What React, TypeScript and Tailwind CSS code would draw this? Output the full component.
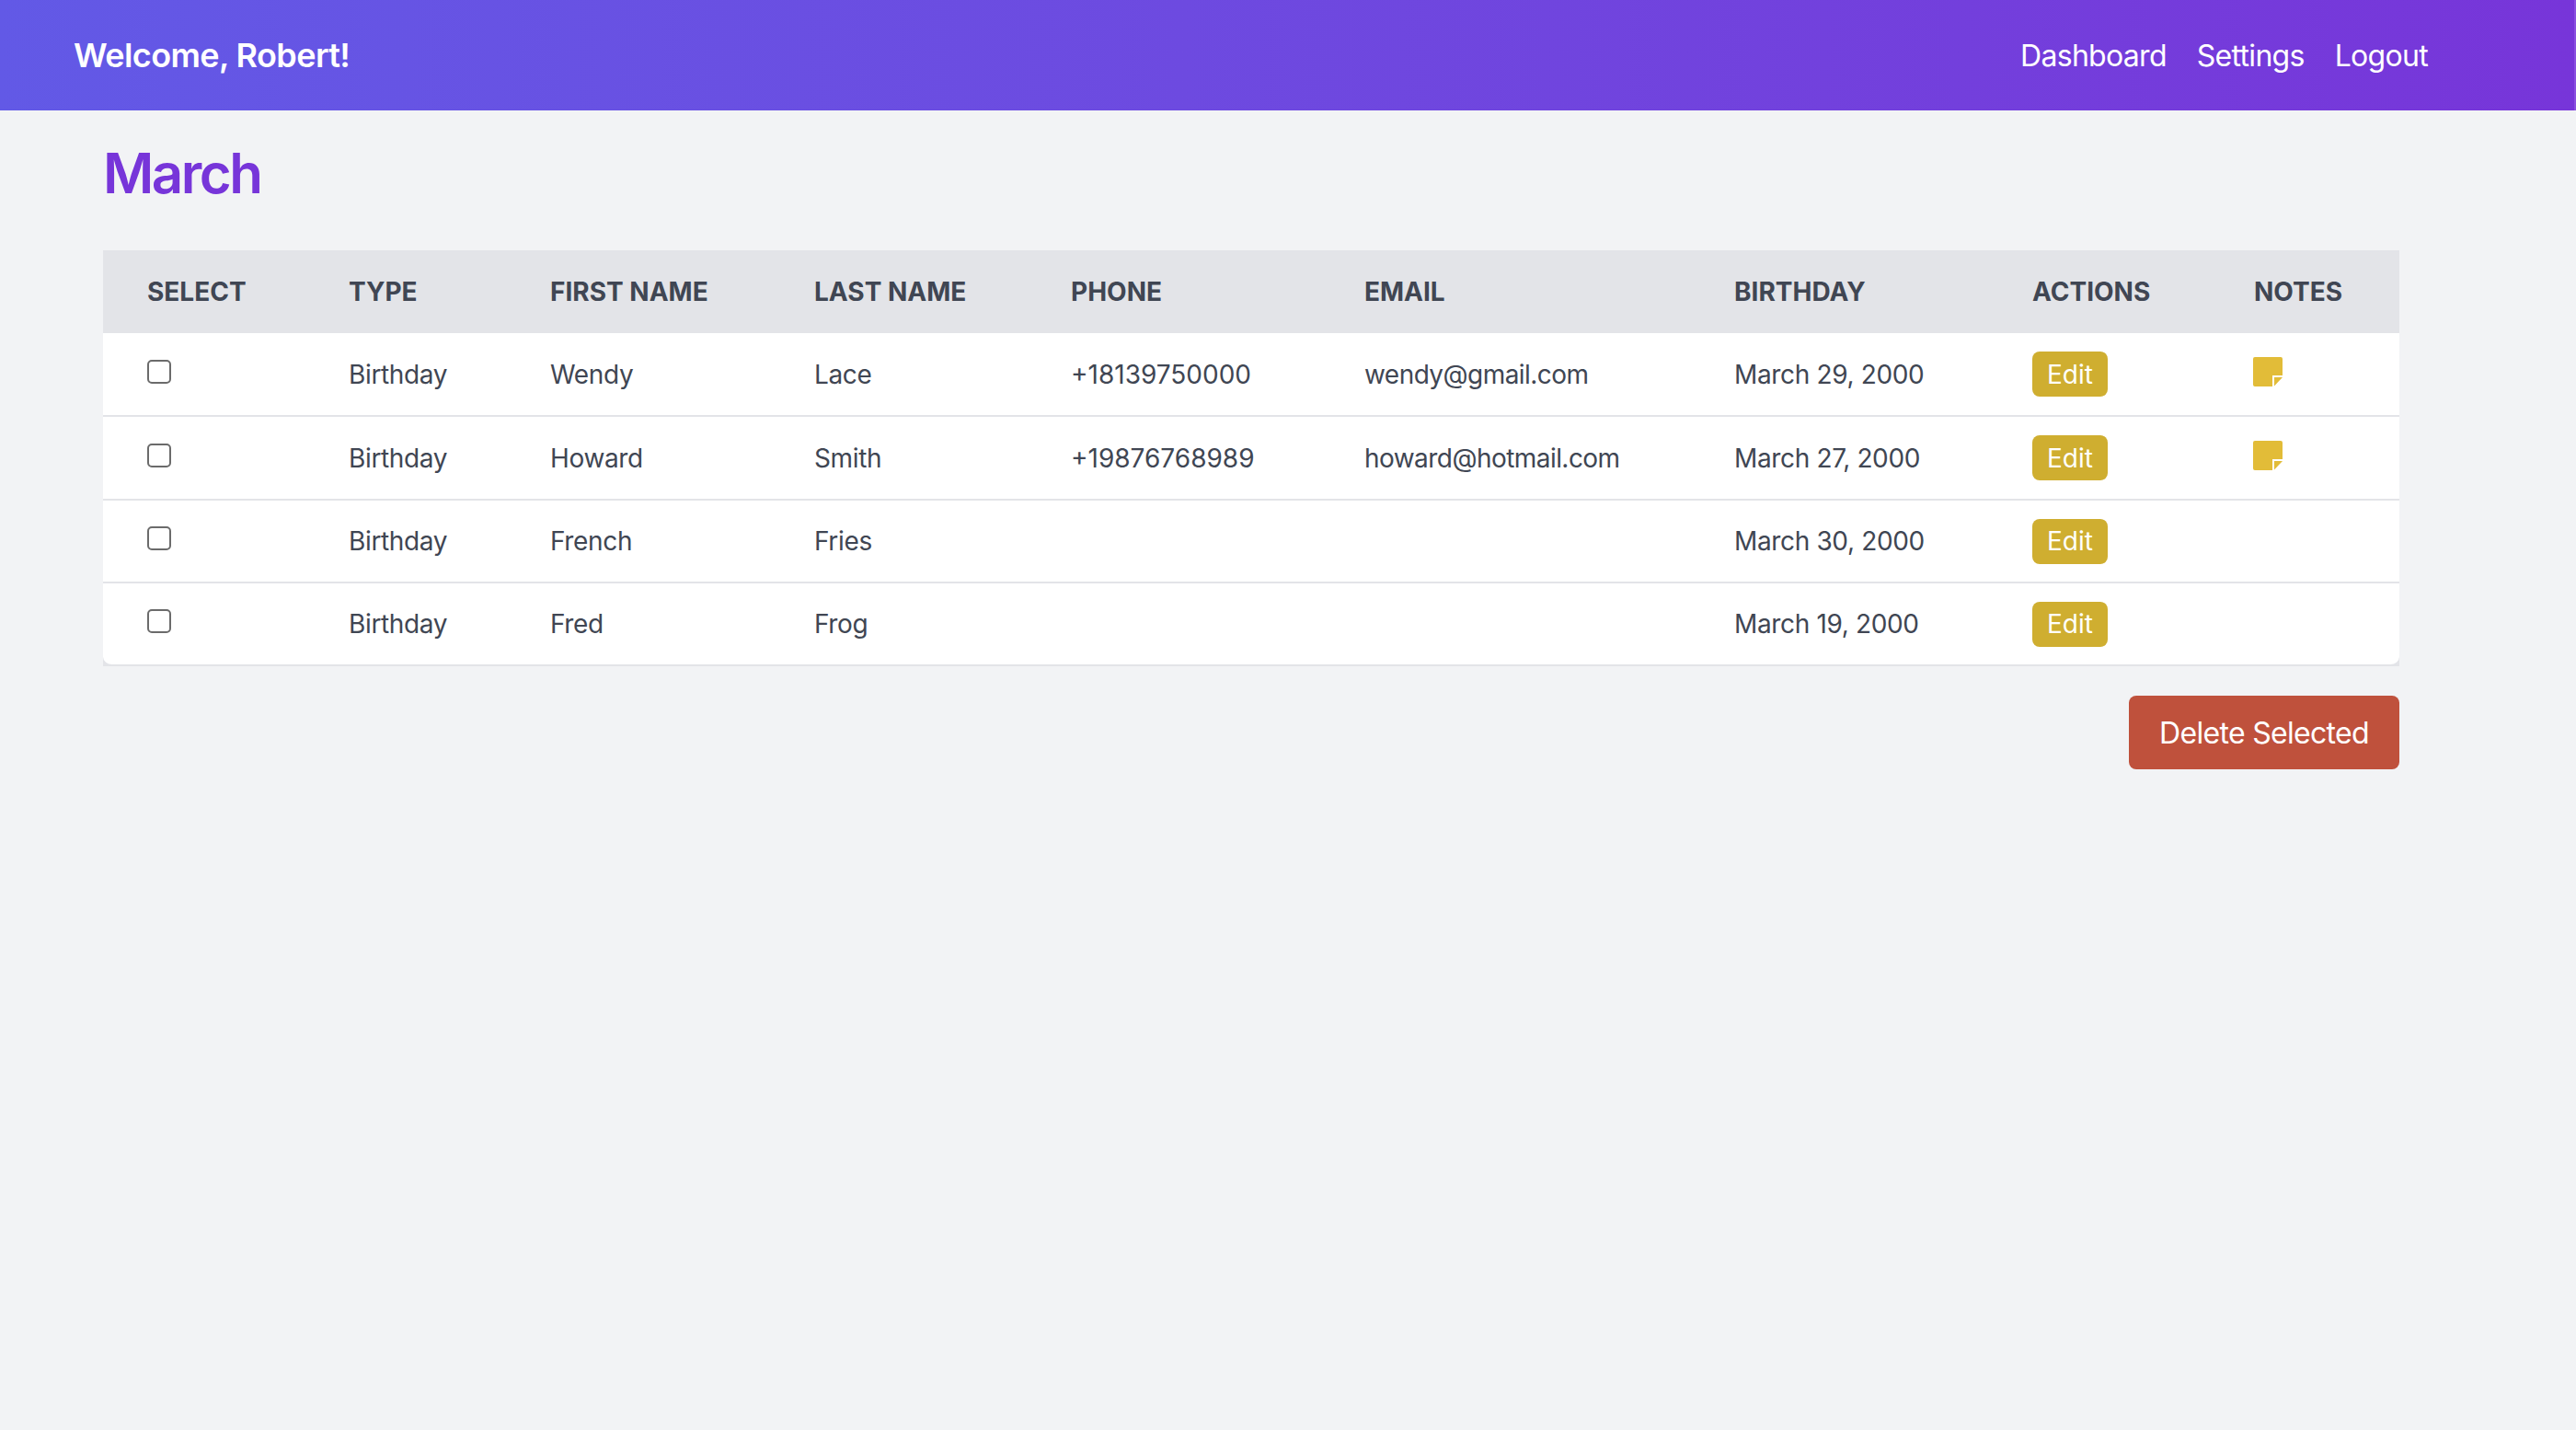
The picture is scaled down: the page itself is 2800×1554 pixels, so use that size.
import React from 'react';

const rows = [
  { first: 'Wendy', last: 'Lace', phone: '+18139750000', email: 'wendy@gmail.com', birthday: 'March 29, 2000', note: true },
  { first: 'Howard', last: 'Smith', phone: '+19876768989', email: 'howard@hotmail.com', birthday: 'March 27, 2000', note: true },
  { first: 'French', last: 'Fries', phone: '', email: '', birthday: 'March 30, 2000', note: false },
  { first: 'Fred', last: 'Frog', phone: '', email: '', birthday: 'March 19, 2000', note: false },
];

function NoteIcon() {
  return (
    <svg width="32" height="32" viewBox="0 0 32 32" className="block">
      <path d="M2 0h28a2 2 0 0 1 2 2v18H21v12H2a2 2 0 0 1-2-2V2a2 2 0 0 1 2-2z" fill="#e2bc38" />
      <path d="M23 22h9l-9 9.5z" fill="#e2bc38" />
    </svg>
  );
}

export default function App() {
  return (
    <div className="min-h-screen bg-[#f2f3f5] font-['Inter',sans-serif]">
      {/* Top bar */}
      <nav className="h-[120px] flex items-center justify-between pl-[80px] pr-[159px] bg-gradient-to-r from-[#6259e6] to-[#7735d9] border-r-2 border-[#8a4fe0] text-white">
        <div className="text-[36px] font-semibold tracking-[-0.6px]">Welcome, Robert!</div>
        <div className="flex items-center gap-[33px] text-[32px] tracking-[-0.7px] pt-[1px]">
          <a>Dashboard</a>
          <a>Settings</a>
          <a>Logout</a>
        </div>
      </nav>

      <main className="pl-[112px] w-[2608px]">
        <h1 className="pt-[32px] h-[152px] text-[60px] leading-[72px] font-semibold text-[#7735d9] tracking-[-2.5px]">March</h1>

        <div className="bg-[#e3e4e8]">
          <table className="w-full table-fixed border-separate border-spacing-0 text-[28px] text-[#404653] tracking-[-0.35px]">
            <thead>
              <tr className="h-[90px] text-left uppercase font-bold">
                <th className="w-[219px] pl-[48px] font-bold tracking-normal">Select</th>
                <th className="w-[219px] pl-[48px] font-bold tracking-normal">Type</th>
                <th className="w-[287px] pl-[48px] font-bold tracking-normal">First Name</th>
                <th className="w-[280px] pl-[48px] font-bold tracking-normal">Last Name</th>
                <th className="w-[318px] pl-[47px] font-bold tracking-normal">Phone</th>
                <th className="w-[402px] pl-[48px] font-bold tracking-normal">Email</th>
                <th className="w-[324px] pl-[48px] font-bold tracking-normal">Birthday</th>
                <th className="w-[241px] pl-[48px] font-bold tracking-normal">Actions</th>
                <th className="pl-[48px] font-bold tracking-normal">Notes</th>
              </tr>
            </thead>
            <tbody>
              {rows.map((r, i) => {
                const h = i < 2 ? 'h-[91px]' : 'h-[90px]';
                return (
                  <tr key={r.first} className={h}>
                    <td className={`pl-[48px] bg-white border-b-2 border-[#e3e4e8] ${i === 3 ? 'rounded-bl-[10px]' : ''}`}>
                      <div className="w-[26px] h-[26px] border-2 border-[#6b6b6b] rounded-[5px] bg-white -mt-[6px]" />
                    </td>
                    <td className="pl-[48px] bg-white border-b-2 border-[#e3e4e8]">Birthday</td>
                    <td className="pl-[48px] bg-white border-b-2 border-[#e3e4e8]">{r.first}</td>
                    <td className="pl-[48px] bg-white border-b-2 border-[#e3e4e8]">{r.last}</td>
                    <td className="pl-[47px] bg-white border-b-2 border-[#e3e4e8] tracking-normal">{r.phone}</td>
                    <td className="pl-[48px] bg-white border-b-2 border-[#e3e4e8] tracking-[-0.55px]">{r.email}</td>
                    <td className="pl-[48px] bg-white border-b-2 border-[#e3e4e8]">{r.birthday}</td>
                    <td className="pl-[48px] bg-white border-b-2 border-[#e3e4e8]">
                      <button className="block w-[82px] h-[49px] rounded-[8px] bg-[#cfae30] text-white text-[28px] tracking-normal">Edit</button>
                    </td>
                    <td className={`pl-[47px] bg-white border-b-2 border-[#e3e4e8] ${i === 3 ? 'rounded-br-[10px]' : ''}`}>
                      {r.note && <div className="-mt-[5px]"><NoteIcon /></div>}
                    </td>
                  </tr>
                );
              })}
            </tbody>
          </table>
        </div>

        <div className="flex justify-end mt-[32px]">
          <button className="w-[294px] h-[80px] pt-[1px] rounded-[8px] bg-[#bf513c] text-white text-[32px] tracking-[-0.7px]">Delete Selected</button>
        </div>
      </main>
    </div>
  );
}
